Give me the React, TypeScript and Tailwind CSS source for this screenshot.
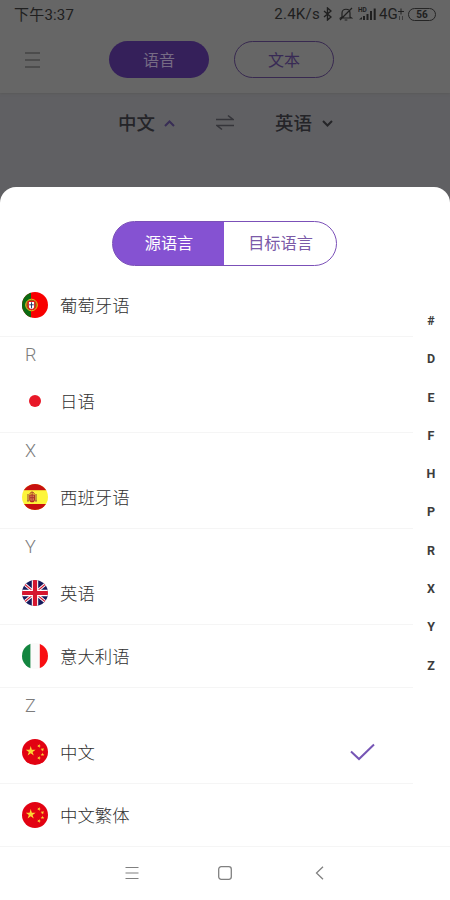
import React from 'react';
import clsx from 'clsx';

type FlagCode = 'pt' | 'jp' | 'es' | 'gb' | 'it' | 'cn';

interface Language {
  name: string;
  flag: FlagCode;
  selected?: boolean;
}

interface LanguageGroup {
  letter?: string;
  languages: Language[];
}

const groups: LanguageGroup[] = [
  { languages: [{ name: '葡萄牙语', flag: 'pt' }] },
  { letter: 'R', languages: [{ name: '日语', flag: 'jp' }] },
  { letter: 'X', languages: [{ name: '西班牙语', flag: 'es' }] },
  {
    letter: 'Y',
    languages: [
      { name: '英语', flag: 'gb' },
      { name: '意大利语', flag: 'it' },
    ],
  },
  {
    letter: 'Z',
    languages: [
      { name: '中文', flag: 'cn', selected: true },
      { name: '中文繁体', flag: 'cn' },
    ],
  },
];

const indexLetters = ['#', 'D', 'E', 'F', 'H', 'P', 'R', 'X', 'Y', 'Z'];

const STAR = '0,-1 0.225,-0.309 0.951,-0.309 0.363,0.118 0.588,0.809 0,0.382 -0.588,0.809 -0.363,0.118 -0.951,-0.309 -0.225,-0.309';

const flagArt: Record<FlagCode, React.ReactNode> = {
  pt: (
    <>
      <rect width="26" height="26" fill="#f80000" />
      <rect width="9" height="26" fill="#0b6b12" />
      <circle cx="9.5" cy="13" r="5.8" fill="#9c5a12" stroke="#e8c21c" strokeWidth="1" />
      <path d="M6.3 9.5h6.4v5c0 4-6.4 4-6.4 0z" fill="#fff" stroke="#e01b1b" strokeWidth="1.2" />
      <path d="M9.5 10.3v6M7.3 12.8h4.4" stroke="#28406f" strokeWidth="1" />
    </>
  ),
  jp: (
    <>
      <rect width="26" height="26" fill="#fff" />
      <circle cx="13" cy="13" r="6" fill="#e81828" />
    </>
  ),
  es: (
    <>
      <rect width="26" height="26" fill="#fdf53b" />
      <rect width="26" height="6.2" fill="#c8100f" />
      <rect y="20" width="26" height="6" fill="#c8100f" />
      <path d="M6 10v7M14 10v7M5 17h2M13 17h2" stroke="#a45a3c" strokeWidth="1.2" />
      <path d="M7.8 11h4.6v4.4c0 3-4.6 3-4.6 0z" fill="#d98a55" stroke="#b02a24" strokeWidth="1.1" />
      <path d="M8 10c0-2.6 4.2-2.6 4.2 0M10.1 8v9M8 13.7h4.2" fill="none" stroke="#a9322b" strokeWidth="1" />
    </>
  ),
  gb: (
    <>
      <rect width="26" height="26" fill="#161a5c" />
      <path d="M0 2l26 22M26 2L0 24" stroke="#fff" strokeWidth="3" />
      <path d="M0 2l26 22M26 2L0 24" stroke="#d5162f" strokeWidth="1.1" />
      <path d="M13 0v26M0 13h26" stroke="#fff" strokeWidth="6.4" />
      <path d="M13 0v26M0 13h26" stroke="#d5162f" strokeWidth="4.2" />
    </>
  ),
  it: (
    <>
      <rect width="26" height="26" fill="#fafafa" />
      <rect width="8.4" height="26" fill="#13853f" />
      <rect x="17.8" width="9" height="26" fill="#f80f12" />
    </>
  ),
  cn: (
    <>
      <rect width="26" height="26" fill="#e20212" />
      <polygon points={STAR} transform="translate(8.7 12.3) scale(5.2)" fill="#fbd535" />
      <polygon points={STAR} transform="translate(17 7) rotate(20) scale(2)" fill="#fbd535" />
      <polygon points={STAR} transform="translate(20.5 10.6) rotate(40) scale(2)" fill="#fbd535" />
      <polygon points={STAR} transform="translate(20.5 15.6) scale(2)" fill="#fbd535" />
      <polygon points={STAR} transform="translate(17 19) rotate(20) scale(2)" fill="#fbd535" />
    </>
  ),
};

const Flag: React.FC<{ code: FlagCode }> = ({ code }) => (
  <svg viewBox="0 0 26 26" className="h-[26px] w-[26px] shrink-0 rounded-full">
    {flagArt[code]}
  </svg>
);

const StatusBar: React.FC = () => (
  <div className="flex h-7 items-center justify-between pr-[14px] pl-[14px] text-[15px] text-[#202020]">
    <span className="pt-[2px] tracking-[0.2px]">下午3:37</span>
    <div className="flex items-center">
      <span className="mr-[3px] pt-[1px] text-[15px] tracking-[0.25px]">2.4K/s</span>
      {/* Bluetooth */}
      <svg width="9" height="14" viewBox="0 0 9 14" fill="none" stroke="currentColor" strokeWidth="1.4" className="mr-[7px]">
        <path d="M1 4l7 6-3.5 3V1L8 4l-7 6" />
      </svg>
      {/* Muted bell */}
      <svg width="14" height="14" viewBox="0 0 14 14" fill="none" stroke="currentColor" strokeWidth="1.2" className="mr-[5px]">
        <path d="M3 10V6c0-5 8-5 8 0v4l1.5 1H1.5zM5.7 13h2.6M13 1L1 13" />
      </svg>
      {/* HD signal */}
      <svg width="19" height="14" viewBox="0 0 19 14" fill="currentColor" className="mr-[2px]">
        <text x="0" y="5.2" fontSize="6.5" fontWeight="700" fontFamily="Roboto, sans-serif">HD</text>
        <path d="M1 12.5l3-2.5v2.5zM5 9h2v4H5zM8.5 7h2v6h-2zM12 4h2v9h-2zM15.7 1.5h2V13h-2z" />
      </svg>
      <span className="pt-[1px] text-[15px] tracking-[0.2px]">4G</span>
      <svg width="6" height="13" viewBox="0 0 6 13" fill="none" stroke="currentColor" className="mr-[4px]">
        <path d="M0 3.5h6M3 .5v6" />
        <path d="M1.5 8v4M4.5 8v4" strokeWidth=".6" />
      </svg>
      <span className="flex h-[13px] w-[28px] items-center justify-center rounded-full border-[1.5px] border-[#252525] pt-[1px] text-[10px] leading-none font-bold">
        56
      </span>
    </div>
  </div>
);

const Header: React.FC = () => (
  <div className="h-[93px] bg-[#666666] shadow-[0_1px_2px_#5a5a5a]">
    <StatusBar />
    <div className="flex items-center pt-[13px] pl-[24px]">
      <svg width="17" height="18" viewBox="0 0 17 18" stroke="#444444" strokeWidth="1.6">
        <path d="M1 2h15M1 9h15M1 16h15" />
      </svg>
      <button className="ml-[68px] h-[37px] w-[100px] rounded-full bg-[#35205a] pt-[2px] text-[16px] text-[#766b84]">语音</button>
      <button className="ml-[25px] h-[37px] w-[100px] rounded-full border border-[#382950] pt-[2px] text-[16px] text-[#382a55]">文本</button>
    </div>
  </div>
);

const LanguageBar: React.FC = () => (
  <div className="flex h-[60px] items-center pl-[118px] text-[18.5px] font-medium text-[#242428]">
    <span className="pt-[3px]">中文</span>
    <svg width="11" height="7" viewBox="0 0 11 7" fill="none" stroke="#382d55" strokeWidth="2" className="ml-[9px]">
      <path d="M1 6l4.5-4.5L10 6" />
    </svg>
    <svg width="18" height="18" viewBox="0 0 18 18" fill="none" stroke="#35353a" strokeWidth="1.6" className="ml-[41px]">
      <path d="M0 5.5h17l-5-4M18 11.5H1l5 4" />
    </svg>
    <span className="ml-[41px] pt-[3px]">英语</span>
    <svg width="11" height="7" viewBox="0 0 11 7" fill="none" stroke="#252528" strokeWidth="2" className="ml-[10px]">
      <path d="M1 1l4.5 4.5L10 1" />
    </svg>
  </div>
);

const LanguageRow: React.FC<{ language: Language; last: boolean }> = ({ language, last }) => (
  <div
    className={clsx(
      'flex h-[63px] items-center border-b border-[#f5f5f5] pl-[22px]',
      last ? 'w-full' : 'w-[413px]',
    )}
  >
    <Flag code={language.flag} />
    <span className="ml-[12px] pt-[2px] text-[17.4px] font-light text-[#303030]">{language.name}</span>
    {language.selected && (
      <svg width="25" height="18" viewBox="0 0 25 18" fill="none" stroke="#7655b5" strokeWidth="2" className="mr-[38px] ml-auto">
        <path d="M1 8.5l8 7.5L24 1.5" />
      </svg>
    )}
  </div>
);

const LanguageSheet: React.FC = () => (
  <div className="relative flex h-[713px] flex-col rounded-t-[16px] bg-white">
    <div className="flex h-[87px] shrink-0 pt-[34px] pl-[112px]">
      <div className="flex h-[45px] w-[225px] overflow-hidden rounded-full border border-[#7b50b8] bg-[linear-gradient(90deg,#8552d2_50%,#fff_50%)] text-[16.2px]">
        <button className="w-[112px] pt-[2px] text-white">源语言</button>
        <button className="flex-1 pt-[2px] text-[#7b5aa8]">目标语言</button>
      </div>
    </div>

    <div>
      {groups.map((group, i) => (
        <div key={i}>
          {group.letter && (
            <div className="flex h-[33px] items-center pt-[2px] pl-[25px] text-[18px] font-light text-[#7c7c7c]">{group.letter}</div>
          )}
          {group.languages.map((language) => (
            <LanguageRow key={language.name} language={language} last={language.name === '中文繁体'} />
          ))}
        </div>
      ))}
    </div>

    {/* Alphabet index floats over the right edge of the list */}
    <div className="absolute top-[115px] right-[9px] flex w-[20px] flex-col items-center text-[12.5px] font-bold text-[#3c3c3c]">
      {indexLetters.map((letter) => (
        <span key={letter} className="h-[38.3px] leading-[38.3px]">
          {letter}
        </span>
      ))}
    </div>

    <div className="flex flex-1 items-center pb-[2px] pl-[125px] text-[#808080]">
      <svg width="14" height="14" viewBox="0 0 14 14" stroke="currentColor" strokeWidth="1.2">
        <path d="M0.5 1.5h13M0.5 7h13M0.5 12.5h13" />
      </svg>
      <svg width="14" height="14" viewBox="0 0 14 14" fill="none" stroke="currentColor" strokeWidth="1.3" className="ml-[79px]">
        <rect x="0.7" y="0.7" width="12.6" height="12.6" rx="2.5" />
      </svg>
      <svg width="9" height="14" viewBox="0 0 9 14" fill="none" stroke="currentColor" strokeWidth="1.3" className="ml-[83px]">
        <path d="M8 0.7L1.5 7 8 13.3" />
      </svg>
    </div>
  </div>
);

const App: React.FC = () => (
  <div className="h-[900px] w-[450px] overflow-hidden bg-[#606063] font-[Roboto,'Noto_Sans_CJK_SC',sans-serif]">
    <Header />
    <div className="h-[94px]">
      <LanguageBar />
    </div>
    <LanguageSheet />
  </div>
);

export default App;
